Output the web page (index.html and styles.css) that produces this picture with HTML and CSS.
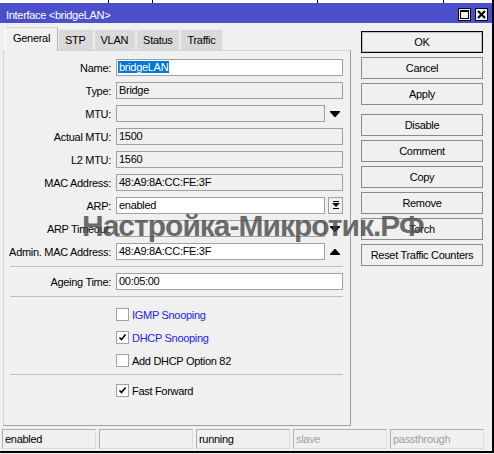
FILE: index.html
```html
<!DOCTYPE html>
<html lang="en">
<head>
  <meta charset="UTF-8">
  <title>Interface &lt;bridgeLAN&gt;</title>
  <link rel="stylesheet" href="styles.css">
</head>
<body>
  <div class="screen">
    <div class="desk">
      <span class="d1"></span><span class="d2"></span><span class="d3"></span><span class="d4"></span>
    </div>
    <div class="window">
      <div class="titlebar">
        <span class="title">Interface &lt;bridgeLAN&gt;</span>
        <div class="tbtns">
          <span class="tbtn">
            <svg width="11" height="11" viewBox="0 0 11 11"><rect x="1.5" y="1.5" width="8" height="8" fill="none" stroke="#000"/><rect x="1" y="1" width="9" height="2" fill="#000"/></svg>
          </span>
          <span class="tbtn">
            <svg width="11" height="11" viewBox="0 0 11 11"><path d="M2 2 L9 9 M9 2 L2 9" stroke="#000" stroke-width="2"/></svg>
          </span>
        </div>
      </div>

      <div class="body">
        <div class="left">
          <div class="tabs">
            <span class="tab active">General</span>
            <span class="tab">STP</span>
            <span class="tab">VLAN</span>
            <span class="tab">Status</span>
            <span class="tab">Traffic</span>
          </div>
          <div class="panel">
            <div class="row">
              <span class="lbl">Name:</span>
              <span class="fld white"><span class="sel">bridgeLAN</span></span>
            </div>
            <div class="row">
              <span class="lbl">Type:</span>
              <span class="fld">Bridge</span>
            </div>
            <div class="row">
              <span class="lbl">MTU:</span>
              <span class="fld short"></span>
              <span class="extra">
                <svg width="10" height="6" viewBox="0 0 10 6"><polygon points="0,0 10,0 10,1 5.5,6 4.5,6 0,1" fill="#000"/></svg>
              </span>
            </div>
            <div class="row">
              <span class="lbl">Actual MTU:</span>
              <span class="fld">1500</span>
            </div>
            <div class="row">
              <span class="lbl">L2 MTU:</span>
              <span class="fld">1560</span>
            </div>
            <div class="row">
              <span class="lbl">MAC Address:</span>
              <span class="fld">48:A9:8A:CC:FE:3F</span>
            </div>
            <div class="row">
              <span class="lbl">ARP:</span>
              <span class="fld short white">enabled</span>
              <span class="extra">
                <span class="dropbtn">
                  <svg width="8" height="9" viewBox="0 0 8 9"><rect x="1" y="0" width="6" height="1" fill="#000"/><polygon points="0,2 8,2 4,6" fill="#000"/><rect x="1" y="7" width="6" height="1" fill="#000"/></svg>
                </span>
              </span>
            </div>
            <div class="row">
              <span class="lbl">ARP Timeout:</span>
              <span class="fld short"></span>
              <span class="extra">
                <svg width="10" height="6" viewBox="0 0 10 6"><polygon points="0,0 10,0 10,1 5.5,6 4.5,6 0,1" fill="#000"/></svg>
              </span>
            </div>
            <div class="row">
              <span class="lbl">Admin. MAC Address:</span>
              <span class="fld short white">48:A9:8A:CC:FE:3F</span>
              <span class="extra">
                <svg width="10" height="6" viewBox="0 0 10 6"><polygon points="0,6 10,6 10,5 5.5,0 4.5,0 0,5" fill="#000"/></svg>
              </span>
            </div>
            <div class="sep"></div>
            <div class="row">
              <span class="lbl">Ageing Time:</span>
              <span class="fld white">00:05:00</span>
            </div>
            <div class="sep sep-checks"></div>
            <div class="row check-row">
              <span class="cb"></span>
              <span class="blue">IGMP Snooping</span>
            </div>
            <div class="row check-row">
              <span class="cb">
                <svg width="9" height="9" viewBox="0 0 9 9"><path d="M1.5 4.5 L3.5 6.5 L7.5 1.5" fill="none" stroke="#000" stroke-width="1.6"/></svg>
              </span>
              <span class="blue">DHCP Snooping</span>
            </div>
            <div class="row check-row">
              <span class="cb"></span>
              <span>Add DHCP Option 82</span>
            </div>
            <div class="sep sep-last"></div>
            <div class="row check-row">
              <span class="cb">
                <svg width="9" height="9" viewBox="0 0 9 9"><path d="M1.5 4.5 L3.5 6.5 L7.5 1.5" fill="none" stroke="#000" stroke-width="1.6"/></svg>
              </span>
              <span>Fast Forward</span>
            </div>
          </div>
        </div>

        <div class="actions">
          <span class="btn default">OK</span>
          <span class="btn">Cancel</span>
          <span class="btn">Apply</span>
          <span class="btn spaced">Disable</span>
          <span class="btn">Comment</span>
          <span class="btn">Copy</span>
          <span class="btn">Remove</span>
          <span class="btn">Torch</span>
          <span class="btn">Reset Traffic Counters</span>
        </div>
      </div>

      <div class="statusbar">
        <span class="cell">enabled</span>
        <span class="cell"></span>
        <span class="cell">running</span>
        <span class="cell muted">slave</span>
        <span class="cell muted">passthrough</span>
      </div>
    </div>
    <div class="watermark">Настройка-Микротик.РФ</div>
  </div>
</body>
</html>
```

FILE: styles.css
```css
* {
  box-sizing: border-box;
}

body {
  margin: 0;
  background: #f0f0f0;
  color: #000;
  font-family: "Liberation Sans", Arial, sans-serif;
  font-size: 11px;
  letter-spacing: -0.3px;
}

.screen {
  position: relative;
  width: 494px;
  height: 453px;
  border-right: 2px solid #000;
  border-bottom: 2px solid #000;
  background: #f0f0f0;
  overflow: hidden;
}

/* bits of the desktop behind the window */
.desk {
  display: flex;
  height: 3px;
  background: #fff;
}

.desk span {
  border-right: 1px solid #000;
}

.d1 { width: 109px; }
.d2 { width: 44px; }
.d3 { width: 165px; }
.d4 { width: 126px; }

.titlebar {
  display: flex;
  height: 20px;
  background: #4c4fcc;
  color: #fff;
}

.title {
  padding: 6px 0 0 6px;
  line-height: 13px;
}

.tbtns {
  display: flex;
  gap: 4px;
  margin-left: auto;
  padding: 5px 4px 0 0;
}

.tbtn {
  display: flex;
  align-items: center;
  justify-content: center;
  width: 13px;
  height: 13px;
  background: #f0f0f0;
  border: 1px solid #000;
}

.body {
  display: flex;
  height: 403px;
}

.left {
  width: 351px;
  padding-left: 3px;
}

.tabs {
  display: flex;
  align-items: flex-end;
  height: 27px;
  padding-left: 2px;
}

.tab {
  height: 21px;
  padding: 1px 7px 0 6px;
  line-height: 19px;
  background: #d9d9d9;
  border: 1px solid #ebebeb;
  border-bottom: none;
}

.tab.active {
  position: relative;
  z-index: 1;
  height: 24px;
  margin-bottom: -1px;
  padding: 0 7px;
  line-height: 20px;
  background: #f0f0f0;
  border-color: #d4d4d4 #b4b4b4 #f0f0f0 #ffffff;
}

.panel {
  height: 376px;
  padding-top: 8px;
  border: 1px solid;
  border-color: #d4d4d4 #a0a0a0 #a0a0a0 #d4d4d4;
}

.row {
  display: flex;
  align-items: center;
  height: 17px;
  margin-bottom: 6px;
}

.lbl {
  width: 107px;
  margin-right: 5px;
  text-align: right;
  white-space: nowrap;
}

.fld {
  width: 227px;
  height: 17px;
  padding-left: 2px;
  line-height: 15px;
  background: #f0f0f0;
  border: 1px solid #a0a0a0;
  white-space: nowrap;
}

.fld.short {
  width: 209px;
}

.fld.white {
  background: #fff;
}

.sel {
  margin-left: -1px;
  padding: 0 1px;
  background: #0078d7;
  color: #fff;
}

.extra {
  display: flex;
  align-items: center;
  justify-content: center;
  width: 18px;
  height: 17px;
  padding-left: 1px;
}

.dropbtn {
  display: flex;
  align-items: center;
  justify-content: center;
  width: 16px;
  height: 17px;
  margin-left: 2px;
  background: #f0f0f0;
  border: 1px solid #a0a0a0;
}

.sep {
  height: 1px;
  margin: 1px 7px 6px 6px;
  background: #bdbdbd;
}

.sep-checks {
  margin: 0 7px 9px 6px;
}

.sep-last {
  margin: -1px 7px 7px 6px;
}

.check-row {
  padding-left: 112px;
}

.cb {
  display: flex;
  align-items: center;
  justify-content: center;
  width: 13px;
  height: 13px;
  margin-right: 3px;
  background: #fff;
  border: 1px solid #a0a0a0;
}

.blue {
  color: #2222ee;
}

.actions {
  display: flex;
  flex-direction: column;
  gap: 4px;
  width: 122px;
  margin-left: 10px;
  padding-top: 8px;
}

.btn {
  display: flex;
  align-items: center;
  justify-content: center;
  height: 22px;
  background: #f0f0f0;
  border: 1px solid #8a8a8a;
  white-space: nowrap;
}

.btn.default {
  border-color: #000;
  box-shadow: inset 0 0 0 1px #c0c0c0;
}

.btn.spaced {
  margin-top: 5px;
}

.statusbar {
  display: flex;
  gap: 3px;
  margin-top: 3px;
  padding-left: 2px;
}

.cell {
  width: 94px;
  height: 20px;
  padding-left: 2px;
  line-height: 18px;
  border: 1px solid;
  border-color: #b0b0b0 #dcdcdc #dcdcdc #b0b0b0;
}

.cell.muted {
  color: #a0a0a0;
}

.watermark {
  position: absolute;
  left: 82px;
  top: 211px;
  font-size: 30px;
  font-weight: bold;
  line-height: 30px;
  letter-spacing: -1px;
  color: rgba(70, 70, 70, 0.8);
  white-space: nowrap;
  pointer-events: none;
}
```
